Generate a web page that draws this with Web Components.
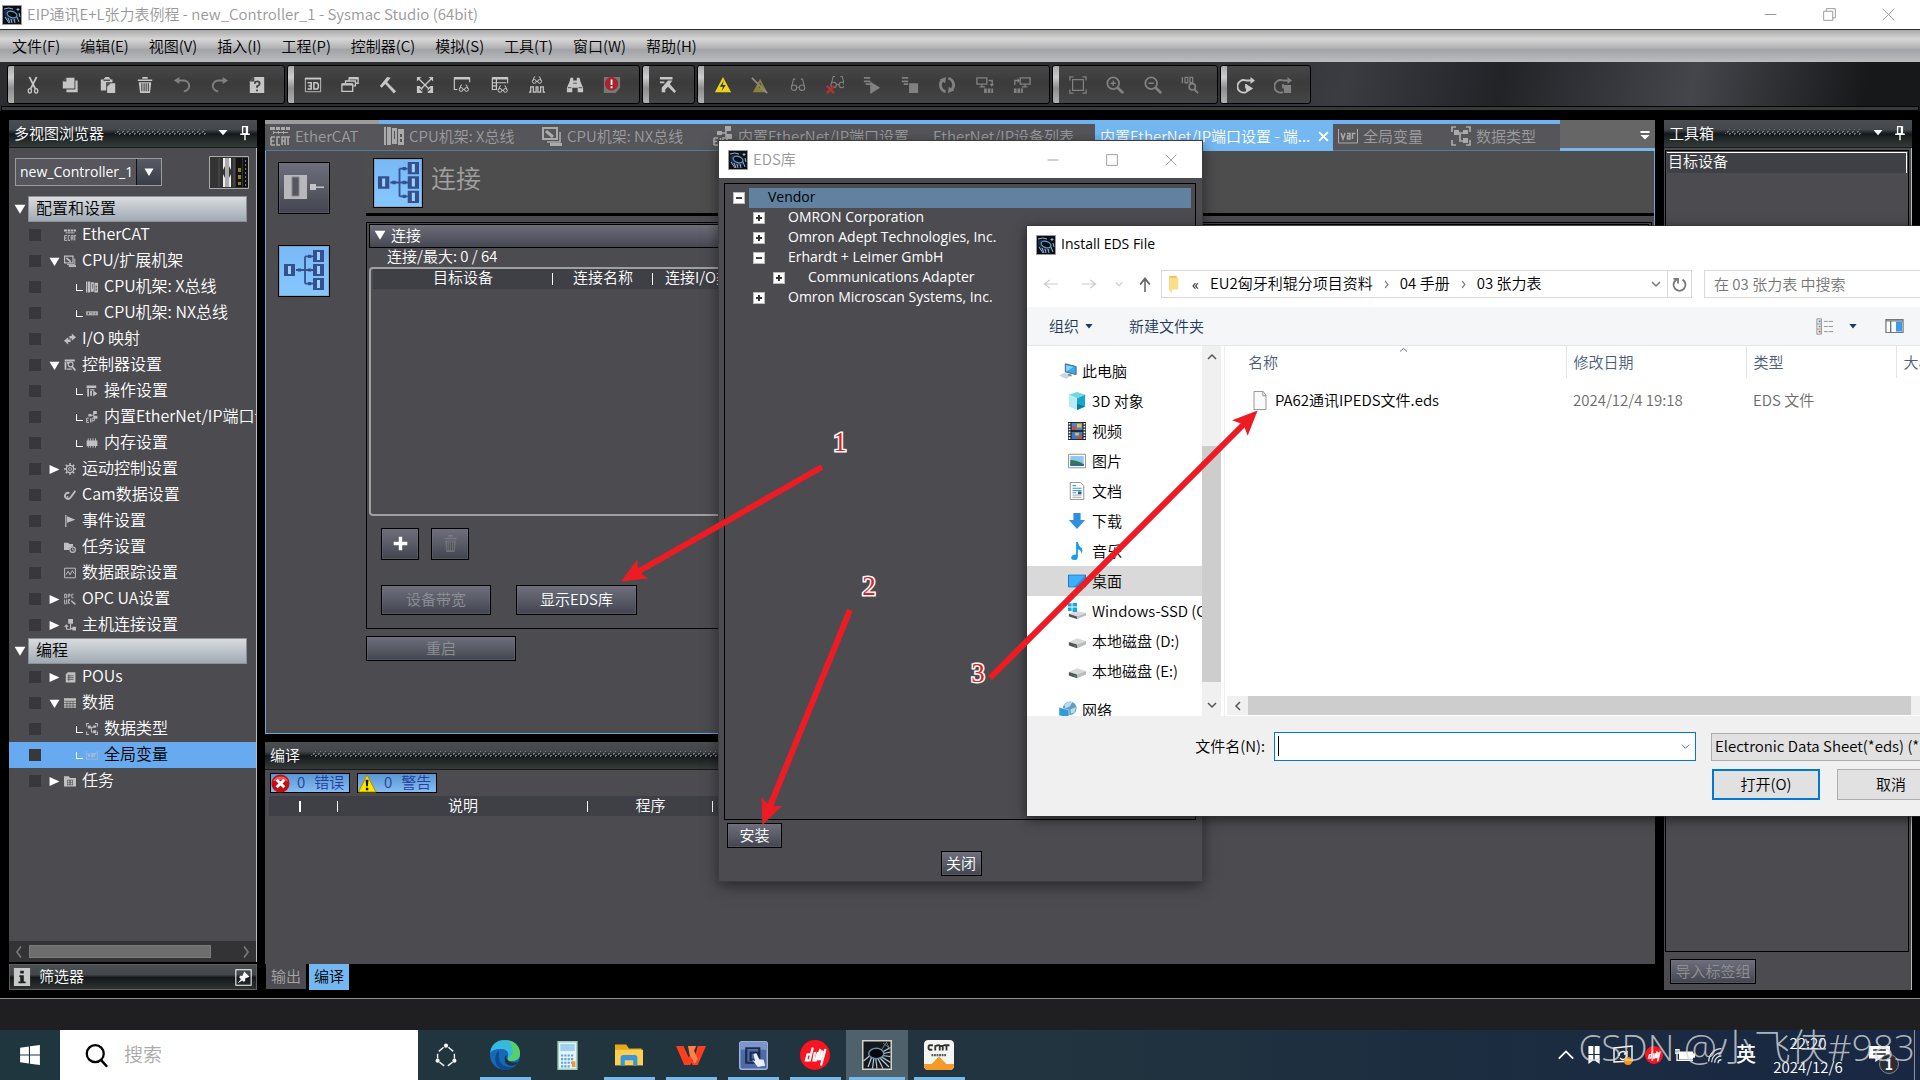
<!DOCTYPE html>
<html lang="zh-CN">
<head>
<meta charset="utf-8">
<title>Sysmac Studio</title>
<style>
html,body{margin:0;height:100%;overflow:hidden;background:#000}
body{font:350 15px/20px "Noto Sans CJK SC","Noto Sans",sans-serif;color:#fff}
</style>
</head>
<body>
<sysmac-desktop></sysmac-desktop>
<script>
const BASE = `*{box-sizing:border-box}:host{display:block}:host([hidden]){display:none}
button,input,select{font:inherit;color:inherit;margin:0;border-radius:0;outline:0}
button{cursor:default;padding:0;background:none;border:0}
select,input{appearance:none;min-width:0}
table{border-collapse:collapse;table-layout:fixed;border-spacing:0}th{font-weight:inherit;padding:0}td{padding:0}`;

function define(name, css, html) {
  customElements.define(name, class extends HTMLElement {
    connectedCallback() {
      if (this.shadowRoot) return;
      const root = this.attachShadow({ mode: 'open' });
      const t = document.createElement('template');
      t.innerHTML = `<style>${BASE}${css}</style>` + (typeof html === 'function' ? html(this) : html);
      root.append(t.content.cloneNode(true));
    }
  });
}

/* ---------- icons, all on a 20 x 20 grid ---------- */
const S = 'fill="none" stroke="currentColor"';
const glasses = `<g ${S} stroke-width="1.2"><circle cx="5.5" cy="13" r="3"/><circle cx="14.500" cy="13" r="3"/><path d="M8.500 12.500h3M3 11.500 5 3.500h2M17 11.500 15 3.500h-2"/></g>`;
const miniGlasses = (x, y) => `<g ${S} stroke-width="1.1" transform="translate(${x} ${y})"><circle cx="3" cy="6" r="2.100"/><circle cx="9" cy="6" r="2.100"/><path d="M5 6h2M1.500 5 3 1h1M10.500 5 9 1H8"/></g>`;
const letters = { // small pixel captions that belong to the pictograms
  ecat: 'M1 11h4M1 11v8M1 15h3M1 19h4M10 11H7v8h3M12 19v-8h3v8M12 15h3M16 11h4M18 11v8',
  eip: 'M1 12h4M1 12v7M1 15.500h3M1 19h4M7.500 12v7M10 19v-7h4v4h-4'
};
const ICONS = {
  cut: `<g ${S} stroke-width="1.500"><path d="M6 1 12.500 14M14 1 7.500 14" stroke-width="2"/><ellipse cx="6.500" cy="16.500" rx="1.800" ry="2.500"/><ellipse cx="13.500" cy="16.500" rx="1.800" ry="2.500"/></g>`,
  copy: `<path fill="currentColor" d="M6 2h9v12H2V6z"/><path fill="#444" d="M6 2v4H2z"/><path fill="currentColor" d="M16 5h2.500v13H6v-3h10z"/>`,
  paste: `<path fill="currentColor" d="M2 4h3l2-3h4l2 3h2v3H8v9H2z"/><path fill="#555" d="M5 4h7v1.500H5z"/><path fill="currentColor" d="M9 8h9v11H9z"/><path fill="#444" d="M9 8h4l-4 4z"/>`,
  trash: `<path fill="currentColor" d="M2 4h16v1.500H2zM7 1h6v2H7zM3 7h14l-1.500 12h-11z"/><path stroke="#444" stroke-width="1.200" d="M6.500 8v9M9 8v9M11.300 8v9M13.700 8v9"/>`,
  undo: `<path ${S} stroke-width="2" d="M5 5h7a5 5 0 0 1 0 12"/><path fill="currentColor" d="M1 5l6-4v8z"/>`,
  redo: `<path ${S} stroke-width="2" d="M15 5H8a5 5 0 0 0 0 12"/><path fill="currentColor" d="M19 5l-6-4v8z"/>`,
  help: `<path fill="currentColor" d="M7 1h11v18H2V6z"/><path fill="none" stroke="#3f3f3f" stroke-width="2" d="M7.500 8.500q0-2.500 2.700-2.500t2.700 2.500q0 1.500-2.800 3v1.500M10 15v2"/><path fill="#444" d="M7 1v5H2z"/>`,
  threeD: `<path fill="currentColor" d="M1 2h18v2H1z"/><path ${S} d="M1.500 2.500h17v15h-17z"/><path ${S} stroke-width="1.700" d="M4 7.500h4v7H4M5 11h3M11 7.500h2.500q2.500 0 2.500 3.500t-2.500 3.500H11z"/>`,
  cascade: `<g ${S} stroke-width="1.500"><path d="M9 5V2h10v6h-3M5 8V5.500h11V11h-2M1 9h12v8H1z"/></g><path fill="currentColor" d="M9 1h10v3H9zM1 8h12v2.500H1z"/>`,
  hammer: `<path fill="currentColor" d="M1 11 9 1l4 1-4 5 10 10-2.500 2.500L7 9l-4 4z"/>`,
  cross: `<path stroke="currentColor" stroke-width="1.500" d="M3 3l14 14M17 3 3 17"/><path fill="currentColor" d="M1 1h5L1 6zM19 1h-5l5 5zM1 11h3l3 3v5H1zM19 11h-3l-3 3v5h6z"/><path stroke="#444" stroke-width="1.200" d="M4 14l3 3M16 14l-3 3"/>`,
  watchwin: `<path fill="currentColor" d="M1 1h18v3H1z"/><path ${S} stroke-width="1.300" d="M1.500 3v12H5M18.500 3v4"/>${miniGlasses(6, 9)}`,
  watchtab: `<path fill="currentColor" d="M1 1h18v3H1z"/><path ${S} stroke-width="1.300" d="M1.500 3v12H7M18.500 3v5M6 3v12M1 7.500h16M1 11h6"/>${miniGlasses(7, 10)}`,
  wave: `${miniGlasses(4, 0)}<path ${S} stroke-width="1.400" d="M1 18h2v-6h3v6h3v-6h2v6h3v-6h3v6h2"/>`,
  binoc: `<path fill="currentColor" d="M5 2h3v3h4V2h3l1 4 3 7v5h-6v-5H7v5H1v-5l3-7z"/><path stroke="#444" d="M8 8h4M2 13h4M14 13h4"/>`,
  alertdoc: `<path fill="#777" d="M1 1h18v12l-5 6H1z"/><circle cx="9.500" cy="8.500" r="7.500" fill="#a8242c"/><path stroke="#fff" stroke-width="2" d="M9.500 4v6M9.500 11.500v2"/>`,
  winhammer: `<path fill="currentColor" d="M1 1h14v3H1zM1 6h5v2H1z"/><path fill="currentColor" d="M3 13l7-8 5 0-3 4 7 8-2 2-7-7-3 3v3H3z"/>`,
  warn: `<path fill="#e9d21e" d="M10 1l9 17H1z"/><path fill="#333" d="M11 5 6.500 12H10l-1.500 5L13 10H9.500z"/>`,
  warnoff: `<path fill="#8b8038" d="M10 3l8 15H2z"/><path stroke="#333" stroke-width="1.500" d="M10 8v5"/><path stroke="#8b8b8b" stroke-width="2" d="M1 2l17 17"/>`,
  glasses,
  glassesoff: `<g transform="translate(3 -3)">${glasses}</g><path stroke="#a33" stroke-width="3" d="M1 11l8 8M9 11l-8 8"/>`,
  play: `<path fill="currentColor" d="M1 1h7v2H1zM1 5h7v2H1zM3 8h5v2H3zM8 6l11 7-11 7z"/>`,
  stop: `<path fill="currentColor" d="M1 1h7v2H1zM1 5h7v2H1zM3 8h5v2H3zM9 8h10v11H9z"/>`,
  cycle: `<g ${S} stroke-width="3"><path d="M8.500 17.500A7.700 7.700 0 0 1 4.500 5M11.500 2.500a7.700 7.700 0 0 1 4 12.500"/></g><path fill="currentColor" d="M2 4l7-3-1 7zM18 16l-7 3 1-7z"/>`,
  pcdown: `<path ${S} stroke-width="1.500" d="M1 2h11v7H1zM4 12h6M6.500 9v3M14 5h4v5"/><path fill="currentColor" d="M15 9h5l-2.500 3zM9 14h3v5H9zM13 14h3v5h-3zM17 14h2v5h-2z"/>`,
  pcup: `<path ${S} stroke-width="1.500" d="M8 2h11v7H8zM10 12h6M13.500 9v3M2 10V5h4"/><path fill="currentColor" d="M5 2.500V8l3-3zM1 14h3v5H1zM5 14h3v5H5zM9 14h2v5H9z"/>`,
  fit: `<path ${S} stroke-width="1.400" d="M1 5V1h4M15 1h4v4M19 15v4h-4M5 19H1v-4M4 4h12v12H4z"/>`,
  zoomin: `<g ${S} stroke-width="2"><circle cx="8" cy="8" r="6.500"/><path d="M13 13l6 6" stroke-width="3"/><path d="M8 5v6M5 8h6" stroke-width="1.500"/></g>`,
  zoomout: `<g ${S} stroke-width="2"><circle cx="8" cy="8" r="6.500"/><path d="M13 13l6 6" stroke-width="3"/><path d="M5 8h6" stroke-width="1.500"/></g>`,
  zoom100: `<g ${S} stroke-width="1.400"><path d="M1.500 1v7M4.500 1.500h3v6h-3zM10 1.500h3v6h-3z"/><circle cx="12.500" cy="12" r="3.500" stroke-width="1.800"/><path d="M15 15l4 4" stroke-width="2"/></g>`,
  runarrow: `<path ${S} stroke-width="2" d="M10 18a7 7 0 1 1 0-13h7M10 9v5"/><path fill="currentColor" d="M15 1l5 4-5 4zM10 9l8 5-8 5z"/>`,
  runstop: `<path ${S} stroke-width="2" d="M10 18a7 7 0 1 1 0-13h7M10 9v5"/><path fill="currentColor" d="M15 1l5 4-5 4zM11 10h8v9h-8z"/>`,

  ecat: `<path ${S} stroke-width="1.600" d="${letters.ecat}"/><path fill="currentColor" d="M0 1h5v3H0zM6 1h4v3H6zM11 1h4v3h-4zM16 1h4v3h-4zM3 5h1v3H3zM8 5h1v3H8zM13 5h1v3h-1zM3 6h15v1H3z"/>`,
  rack: `<path fill="currentColor" d="M0 1h2v18H0zM3 1h4v18H3zM8 2h5v16H8zM14 3h6v16h-6z"/><path fill="#555" d="M10 5h1v8h-1zM16 8h2v3h-2zM16 13h2v3h-2z"/>`,
  racktool: `<path ${S} stroke-width="2" d="M1 2h14v11H1z"/><path stroke="currentColor" stroke-width="3" d="M4 5l7 6"/><path ${S} stroke-width="1.600" d="M5 16h13V6"/><path fill="currentColor" d="M8 17h12v3H8z"/>`,
  nxrack: `<path fill="#aaa" d="M0 7h20v7H0z"/><path fill="#555" d="M3 9h2v3H3zM11 9h1v3h-1zM15 9h1v3h-1z"/><path fill="#c66" d="M7 8h2v2H7z"/>`,
  eip: `<path ${S} stroke-width="1.600" d="${letters.eip}M6 7h7M13 3v8"/><path fill="currentColor" d="M4 5h5v4H4zM12 0h6v5h-6zM13 8h6v5h-6z"/>`,
  vari: `<path ${S} stroke-width="1" d="M.5 3v14h19V3"/><path ${S} stroke-width="1.500" d="M3 7l2 6 2-6M9 7.500h3v5.500H9.500v-3H12M14.500 13V7.500h3"/>`,
  types: `<path ${S} stroke-width="1.700" d="M1 6V1h4M15 1h4v5M1 14v5h4M15 19h4v-5M7 7h6M9 7v8h4"/><path fill="currentColor" d="M3 4h5v5H3zM12 4h5v4h-5zM12 12h5v5h-5z"/>`,
  iomap: `<path fill="currentColor" d="M9 5h4V1l7 6-7 6V9H9zM11 11v4H7v4l-7-6 7-6v4z"/>`,
  ctrl: `<path fill="currentColor" d="M1 1h17v3H1zM1 5h3v13H1zM5 5h4v3H5zM5 16h8v2H5z"/><circle cx="11" cy="9" r="4" ${S} stroke-width="2"/><path stroke="currentColor" stroke-width="3" d="M13 12l6 7"/>`,
  opset: `<path fill="currentColor" d="M1 1h16v4H1zM2 6h3v13H2zM7 7h7v2H7zM7 10h3v8H7zM12 9l7 5-7 5z"/>`,
  memory: `<path fill="currentColor" d="M1 6h18v9H1zM3 2h1.500v16H3zM7 2h1.500v16H7zM11 2h1.500v16H11zM15 2h1.500v16H15z"/>`,
  gear: `<g ${S}><circle cx="10" cy="10" r="6" stroke-width="2"/><circle cx="10" cy="10" r="2.500" stroke-width="1.500"/><path stroke-width="2.500" d="M10 0v4M10 16v4M0 10h4M16 10h4M3 3l3 3M14 14l3 3M17 3l-3 3M6 14l-3 3"/></g>`,
  cam: `<path ${S} stroke-width="3" d="M9 7a5 5 0 1 0 2 7l8-11"/><circle cx="6" cy="13" r="1.500" fill="currentColor"/>`,
  flag: `<path fill="currentColor" d="M2 0h2v20H2zM5 2l14 6-14 5z"/>`,
  taskset: `<path fill="currentColor" d="M0 3h7l2 2h6v4a6 6 0 0 0-6 6H0z"/><circle cx="14.500" cy="14.500" r="4.500" ${S} stroke-width="1.800"/><path ${S} stroke-width="1.400" d="M14.500 12v3h2.500"/>`,
  trace: `<path ${S} stroke-width="1.600" d="M1 2h18v16H1zM3 13l4-6 3 6 4-7 3 5"/>`,
  opc: `<path ${S} stroke-width="1.500" d="M1 2h3v6H1zM7 8V2h3v3H7M16 2h-3v6h3M1 11v7h3v-7M7 18v-7h3l-3 4 3 3"/><path stroke="currentColor" stroke-width="2.500" d="M12 13l7 6"/>`,
  host: `<path fill="currentColor" d="M7 0h8v8H7zM14 13h6v6h-6z"/><path ${S} stroke-width="1.800" d="M11 8v9H4M1 13l3-3 3 3M4 10v7M11 16h4"/>`,
  pou: `<path fill="currentColor" d="M6 2h13v17H3V6z"/><path stroke="#555" stroke-width="1.400" d="M6 8h10M6 11h10M6 14h10M8 6v11"/>`,
  grid: `<path fill="currentColor" d="M0 2h20v16H0z"/><path stroke="#555" stroke-width="1.300" d="M0 7h20M0 11h20M0 15h20M5 7v11M10 7v11M15 7v11"/>`,
  taskf: `<path fill="currentColor" d="M0 2h8l2 3h10v14H0z"/><path fill="#555" d="M5 8h10v9H5z"/><path fill="currentColor" d="M6 9h3v3H6zM11 9h3v3h-3zM6 13h3v3H6zM11 13h3v3h-3z"/>`,

  app: `<path fill="#0c1016" stroke="#9a9a9a" d="M.5.500h19v19H.5z"/><path fill="#1c2c44" d="M2 6q7-4 15 4l-3 6q-7 2-11-3z"/><ellipse cx="10" cy="9.500" rx="5" ry="3" fill="#080c12" stroke="#5b9cc8" stroke-width="1.200" transform="rotate(20 10 9.500)"/><path stroke="#a8c4dc" stroke-width=".900" fill="none" d="M2 4q5-2 9 0M3 12l4 6M6 13l2 5M9 14l1 4M12 14l1 4M15 12l2 5M16 3v3M14.500 4.500h3M17 8l1 4"/>`,
  pin: `<path ${S} stroke-width="1.700" d="M7 2h6v9H7zM4 11.500h12M10 12v7"/><path fill="currentColor" d="M11 2h2v9h-2z"/>`,
  pushpin: `<path ${S} stroke-width="1.200" d="M1 1h18v18H1z"/><path fill="currentColor" d="M11 3l6 6-2 1-3 1v3l-2 1-5-5 1-2h3l1-3zM7 12l1.500 1.500L3 17z"/>`,
  info: `<path fill="#c9c9c9" d="M1 0h18v20H1z"/><path fill="#222" d="M8 3h4v3H8zM7 8h5v7h2v2H6v-2h2v-5H7z"/>`,
  tri: `<path fill="currentColor" d="M1 3h18L10 18z"/>`,
  triR: `<path fill="currentColor" d="M1 2v16l18-8z"/>`,
  plus: `<path fill="currentColor" d="M8 2h4v6h6v4h-6v6H8v-6H2V8h6z"/>`,
  chevD: `<path ${S} stroke-width="3" d="M2 6l8 8 8-8"/>`,
  chevU: `<path ${S} stroke-width="3" d="M2 14l8-8 8 8"/>`,
  chevL: `<path ${S} stroke-width="3" d="M14 2l-8 8 8 8"/>`,
  chevR: `<path ${S} stroke-width="3" d="M6 2l8 8-8 8"/>`,
  thinD: `<path ${S} stroke-width="2" d="M2 6l8 8 8-8"/>`,
  thinU: `<path ${S} stroke-width="2" d="M2 14l8-8 8 8"/>`,
  min: `<path stroke="currentColor" stroke-width="1.500" d="M1 10h18"/>`,
  max: `<path ${S} stroke-width="1.500" d="M1 1h18v18H1z"/>`,
  restore: `<path ${S} stroke-width="1.500" d="M1 5h14v14H1zM5 5V1h14v14h-4"/>`,
  close: `<path stroke="currentColor" stroke-width="1.500" d="M1 1l18 18M19 1 1 19"/>`,
  bigclose: `<path stroke="currentColor" stroke-width="3.500" d="M2 2l16 16M18 2 2 18"/>`,
  tabmenu: `<path fill="currentColor" d="M1 2h18v4H1zM1 10h18l-9 9z"/>`,
  err: `<circle cx="10" cy="10" r="9.500" fill="#c40d12"/><path fill="#e85a55" d="M2 8a8.500 8 0 0 1 16 0q-8-4-16 0z"/><path stroke="#fff" stroke-width="3" d="M6 6l8 8M14 6l-8 8"/>`,
  bang: `<path fill="#ffe500" stroke="#a08a00" d="M9.500 1 19 19H.5z"/><path fill="#111" d="M8 6h3l-.6 7H8.600zM8.300 14.500h2.500v2.500H8.300z"/>`,
  topo: `<path ${S} stroke-width=".900" d="M6 10h10M10.500 3.200v13.600M10.500 3.200h4M10.500 16.800h4"/><path fill="currentColor" d="M0 7h5.500v6H0zM14.500 0H20v6h-5.500zM14.500 7H20v6h-5.500zM14.500 14H20v6h-5.500zM7 9.200h1.600v1.600H7zM12 9.200h1.600v1.600H12zM12 2.400h1.600V4H12zM12 16h1.600v1.600H12z"/><path fill="#9fd0ff" d="M2 8h1.500v4H2zM16.500 1H18v4h-1.500zM16.500 8H18v4h-1.500zM16.500 15H18v4h-1.500z"/>`,
  device: `<path fill="#b8b8bc" d="M0 4h11.500v12H0z"/><path fill="#55565e" stroke="#888" stroke-width=".500" d="M4 5h3.500v9.500H4z"/><path fill="#c4c4c8" d="M13 8.500h3v3h-3zM16 9.700h4v.800h-4z"/>`,

  back: `<path ${S} stroke-width="2" d="M20 10H2M9 3l-7 7 7 7"/>`,
  fwd: `<path ${S} stroke-width="2" d="M0 10h18M11 3l7 7-7 7"/>`,
  up: `<path ${S} stroke-width="2.600" d="M10 20V2M2 10l8-8 8 8"/>`,
  refresh: `<path ${S} stroke-width="2.400" d="M6 3.500a8 8 0 1 0 8 0M2 2.500h6v6"/>`,
  folder: `<path fill="#f0c04e" d="M3 1h11v14H3z"/><path fill="#fadd84" d="M3 1l4 3v16l-4-3zM7 3h9v13H7z"/>`,
  list: `<path fill="none" stroke="#888" d="M1 1h5v18H1zM1 7h5M1 13h5M9 4h4M14 4h5M9 10h4M14 10h5M9 16h4M14 16h5"/><path fill="#3a78c8" d="M3 3h2v2H3z"/><path fill="#5a9a40" d="M3 9h2v2H3z"/><path fill="#c33" d="M3 15h2v2H3z"/>`,
  pane: `<path fill="#fff" stroke="#777" stroke-width="1.300" d="M1 2h18v16H1z"/><path stroke="#777" stroke-width="1.500" d="M1 3.500h18M6 3v15"/><path fill="#3d9be8" d="M11.500 4.500H18V17h-6.500z"/>`,
  pc: `<path fill="#3aa9e9" stroke="#3f6076" d="M7 2l12 3v9L7 11z"/><path fill="#8fd4ff" d="M8 3.500l8 2-8 5z"/><path fill="#cdd6dd" d="M0 15l6-3 8 3-6 4z"/><path fill="#7d8a94" d="M10 13l4 1v2l-4-1z"/>`,
  cube: `<path fill="#6fd7e4" d="M10 0l9 3-9 4-9-4z"/><path fill="#b7ecf0" d="M1 3l9 4v13l-9-4z"/><path fill="#1aa6c9" d="M19 3l-9 4v13l9-4z"/><path fill="#0b7e9e" d="M10 13l9 3-9 4z"/>`,
  film: `<path fill="#222" d="M0 0h20v20H0z"/><path fill="#4a86d8" d="M4 1h12v8H4z"/><path fill="#3a7ad0" d="M4 11h12v8H4z"/><path fill="#d84a2a" d="M5 5h4v4H5zM11 15h4v4h-4z"/><path fill="#f0c030" d="M10 2h5v4h-5zM8 12h4v3H8z"/><path stroke="#fff" stroke-width="2" stroke-dasharray="1.800 1.400" d="M1.700 1v19M18.300 1v19"/>`,
  pic: `<path fill="#fff" stroke="#888" d="M.5 2.500h19v15H.5z"/><path fill="#8cc8f4" d="M2.500 4.500h15v11h-15z"/><path fill="#3b7553" d="M2.500 9q7 0 15 4.500v2h-15z"/><path fill="#2b6aa8" d="M2.500 13.500h15v2h-15z"/>`,
  doc: `<path fill="#fff" stroke="#888" d="M2.500.500H14l3.500 3.500v15.500h-15z"/><path stroke="#3a96d8" stroke-width="1.200" d="M5 4h4M5 7h10M5 9.500h10M5 12h4"/><path stroke="#999" d="M5 14.500h10M5 17h10"/><path fill="#2b5a88" d="M11 10.500h4v3h-4z"/>`,
  down: `<path fill="#2f8fe0" d="M6 1h8v8h5l-9 10L1 9h5z"/>`,
  note: `<path fill="#1a9bee" d="M9 0h2q1 5 4.500 7 1.500 3-.5 6-.5-4-4-5v8q0 4-4 4-3.500 0-3.500-2.500Q4 14 9 14z"/>`,
  desk: `<path fill="#1a9af5" stroke="#0b68b4" d="M.5 3.500h19v13H.5z"/><path fill="#3fb0ff" d="M1 4h18L7 16H1z"/>`,
  disk: `<path fill="#d8dadc" d="M1 11l9-4 10 3-10 4z"/><path fill="#555" d="M1 11l9 3v4l-9-3z"/><path fill="#b9bbbd" d="M10 14l10-4v4l-10 4z"/><path fill="#3c3" d="M7 15h2v1H7z"/>`,
  ssd: `<path fill="#d8dadc" d="M1 13l9-3 10 2-10 4z"/><path fill="#555" d="M1 13l9 3v3l-9-3z"/><path fill="#b9bbbd" d="M10 16l10-4v3l-10 4z"/><path fill="#16a9e8" d="M0 1.500h4V5H0zM5 1h5v4H5zM0 6h4v4H0zM5 6h5v5H5z"/>`,
  net: `<circle cx="12" cy="8" r="7.500" fill="#5f9bc4"/><path fill="#b8dcec" d="M6 4q5-5 9-3l-3 5-5 2zM13 9l6-2-2 6-4 1z"/><path fill="#2f9bdc" stroke="#fff" stroke-width=".500" d="M0 7l11 3v9L0 16z"/>`,
  file: `<path fill="#fbfbfb" stroke="#8a8a8a" d="M2.500.500H14l3.500 4v15h-15z"/><path fill="none" stroke="#8a8a8a" d="M13.500.500v4.500h4"/>`,

  win: `<path fill="#fff" d="M1 3.500l8-1.200v7.200H1zM10 2.100 19 1v8.500h-9zM1 10.500h8v7.200l-8-1.200zM10 10.500h9V19l-9-1.100z"/>`,
  search: `<circle cx="9" cy="8.500" r="6.800" fill="none" stroke="#000" stroke-width="1.800"/><path stroke="#000" stroke-width="2" d="M13.500 13.500 18.500 19"/>`,
  hex: `<g fill="none" stroke="#e8eef0" stroke-width="1.200"><path d="M8 3.500 4 7M12 3.500 16 7M3 9v4M17 9v4M4.500 16l4 3M15.500 16l-4 3"/></g><g fill="#fff"><circle cx="10" cy="2.200" r="1.700"/><circle cx="3" cy="14.700" r="1.700"/><circle cx="17" cy="14.700" r="1.700"/></g>`,
  edge: `<circle cx="10" cy="10" r="10" fill="#1668b8"/><path fill="#36b9dc" d="M0 9Q1 0 10 0t10 9q0 5-6 5-3 0-2-3 1-5-5-5T0 9z"/><path fill="#58d06a" d="M12 .300Q20 2 20 9q0 5-6 5-2 0-2-2 4-2 3-6T12 .300z"/><path fill="#0c4a92" d="M6 9q-1 9 8 9 2 0 3.500-1-3 3-7.500 3Q4 19 3.500 13q0-4 2.500-6z"/><path fill="#22303a" d="M11 10q-1 4 4 5 3 .300 4-1-2 4-6 3-4-1-3-6z"/>`,
  calc: `<path fill="#e9f2f8" stroke="#9cb" d="M3.500.500h13v19h-13z"/><path fill="#9fd0ee" d="M5 2h10v5H5z"/><path stroke="#5aa6d8" stroke-width="1.500" stroke-dasharray="1.500 .800" d="M5.500 10h9M5.500 12.500h9M5.500 15h9M5.500 17.500h6"/><path fill="#f09a30" d="M13 14h2.500v4H13z"/>`,
  explorer: `<path fill="#e8a81c" d="M0 2h8l2 3h9v4H0z"/><path fill="#fccf50" d="M0 6h20v12H0z"/><path fill="#3a96dc" d="M4 18v-6q0-2 2-2h8q2 0 2 2v6h-3v-4H7v4z"/>`,
  wps: `<path fill="#ff3d1f" d="M0 1h5l3.500 11 2-6 2 4-3 9h-4z"/><path fill="#ff3d1f" d="M14.500 1H20l-5.500 18h-3.500l-1-3 2-2z"/><path fill="#ff8048" d="M8 1h5.500L12 5.500 14.500 13l-2 5-3.500-9z"/>`,
  finger: `<rect width="20" height="20" rx="2" fill="#9fb3da"/><rect x="1" y="1" width="18" height="18" rx="1" fill="#4f6ba6"/><path fill="#7d96cc" d="M1 1h18v5H1z"/><path fill="none" stroke="#1d2b50" stroke-width="1.500" d="M5 5h9v10H5zM8 8h5v5H8z"/><path fill="#e9eefc" d="M10 9l2-.500 2 4 3 .500 1 4-5 1-4-5 2 1z"/>`,
  dip: `<circle cx="10" cy="10" r="10" fill="#fb1420"/><path fill="none" stroke="#fff" stroke-width="1.500" d="M8.500 5 6.500 13.500H4L5 9.500h2.500M10 8l-1 5.500h1.500L12 8M13.500 6 12 13.500M15 7l-1.500 6.500M17 6l-3 11"/>`,
  appbig: `<path fill="#15191e" stroke="#d4d4c8" d="M.5.500h19v19H.5z"/><path stroke="#b9cdd8" stroke-width=".800" d="M10 10l9-5M10 10l9-2M10 10l9 1M11 10l8 5M11 11l7 7M10 11l4 8M9 11l1 8M8 11l-1 8M7 10l-3 8M7 9l-6 5"/><path stroke="#77808a" stroke-width=".600" d="M12 8l4-6M14 2l5 4M16 1l3 6"/><ellipse cx="9.500" cy="9" rx="5" ry="3.500" fill="#05080c" stroke="#6a8ea4"/>`,
  cmt: `<path fill="#f4f4f2" d="M0 3q0-3 3-3h14q3 0 3 3v14q0 3-3 3H3q-3 0-3-3z"/><path fill="#f59a28" d="M10 11l5 5h5q0 4-3 4H3q-3 0-3-4h5z"/><path fill="none" stroke="#333" stroke-width="1.200" d="M6 3.500H4q-1 0-1 1.500t1 1.500h1.500M7.500 7V4q3-1 3 0v3M10.500 4h2v3M13 3.500h4M15 3.500V7"/><path stroke="#555" stroke-width="1.500" stroke-dasharray="1.200 .500" d="M5 10h10"/>`,
  squares: `<path fill="#fff" d="M2 0h7v9H2zM11 0h7v9h-7zM2 10h7v6l-7 4zM11 10h7v10l-7-4z"/>`,
  cast: `<path fill="none" stroke="#fff" stroke-width="1.400" d="M1 3l18-2v15L1 17zM6 11a4 4 0 0 1 7-3M14 6v3h-3M14 10a4 4 0 0 1-7 3"/><circle cx="15" cy="16" r="4" fill="#ff9500"/>`,
  battery: `<path fill="#fff" d="M4 6h14v9H4zM18 8h2v5h-2z"/><path fill="none" stroke="#fff" stroke-width="1.300" d="M2 4v12h16M0 4h4v4H0z"/>`,
  wifi: `<path fill="none" stroke="#dfe6ea" stroke-width="1.500" d="M2 17A15 15 0 0 1 17 2M5.500 18A11.500 11.500 0 0 1 17 6.500M9 18.500a8 8 0 0 1 8-8M13 19a4 4 0 0 1 4-4"/>`,
  notif: `<path fill="#fff" d="M0 1h20v14H11l-5 4v-4H0z"/><path stroke="#223" stroke-width="1.500" d="M4 5.500h12M4 10h12"/>`
};
customElements.define('ui-icon', class extends HTMLElement {
  connectedCallback() {
    if (this.shadowRoot) return;
    const s = this.getAttribute('size') || '20', h = this.getAttribute('h') || s;
    this.attachShadow({ mode: 'open' }).innerHTML =
      `<style>:host{display:block;flex:none;width:${s}px;height:${h}px}svg{display:block;width:100%;height:100%}</style>` +
      `<svg viewBox="0 0 20 20" preserveAspectRatio="none" aria-hidden="true">${ICONS[this.getAttribute('name')]}</svg>`;
  }
});
const ic = (n, s = 20, h = '') => `<ui-icon name="${n}" size="${s}" ${h ? `h="${h}"` : ''}></ui-icon>`;

/* ---------- main window chrome ---------- */
define('window-title', `:host{height:30px;background:#fff;border-bottom:1px solid #2d3030;color:#999}
header{display:flex;align-items:center;height:29px;padding:0 25px 0 2px;gap:5px}
h1{font-size:15px;font-weight:inherit;margin:0;flex:1;padding-bottom:2px}nav{display:flex;gap:46px}button{display:block}`,
  `<header>${ic('app')}<h1><slot></slot></h1><nav><button aria-label="最小化">${ic('min', 13)}</button><button aria-label="还原">${ic('restore', 13)}</button><button aria-label="关闭">${ic('close', 13)}</button></nav></header>`);

define('menu-bar', `:host{height:32px;background:linear-gradient(#a9a9ab,#d6d6d6 28%,#b4b4b6 55%,#a2a3a7 62%,#bcbdbf);color:#000}
nav{display:flex;align-items:center;height:32px;padding-left:12px;gap:20px}button{white-space:nowrap}`,
  () => `<nav>${['文件(F)', '编辑(E)', '视图(V)', '插入(I)', '工程(P)', '控制器(C)', '模拟(S)', '工具(T)', '窗口(W)', '帮助(H)'].map(t => `<button>${t}</button>`).join('')}</nav>`);

define('tool-group', `:host{height:39px;border:1px solid #000;border-radius:3px;background:linear-gradient(#474747,#3b3b3b 45%,#454545);overflow:hidden}
div{display:flex;height:37px;padding-right:8px}i{width:6px;background:linear-gradient(#aaa,#cdcdcd 30%,#8d8d8d 60%,#b2b2b2)}
button{flex:1;display:flex;align-items:center;justify-content:center;color:#c6c6c6}button.d{color:#818181}`,
  el => `<div><i></i>${el.getAttribute('icons').split(' ').map(n => { const d = n[0] === '-'; const k = d ? n.slice(1) : n; return `<button class="${d ? 'd' : ''}" aria-label="${k}">${ic(k, 18)}</button>`; }).join('')}</div>`);

define('tool-bar', `:host{height:49px;background:linear-gradient(100deg,#2b2d31 60%,#3b3c42 70%,#222327 78%,#45464b 88%,#17181a 97%)}
div{display:flex;gap:2px;padding:3px 0 2px 7px;height:44px}
tool-group:nth-child(1){width:278px}tool-group:nth-child(2){width:353px}tool-group:nth-child(3){width:53px}tool-group:nth-child(4){width:353px}tool-group:nth-child(5){width:166px}tool-group:nth-child(6){width:91px}
hr{margin:0 1px;border:1px solid #050505;height:5px;background:#38393b}`,
  `<div><tool-group icons="cut copy paste trash -undo -redo help"></tool-group>
<tool-group icons="threeD cascade hammer cross watchwin watchtab wave binoc alertdoc"></tool-group>
<tool-group icons="winhammer"></tool-group>
<tool-group icons="warn warnoff -glasses -glassesoff -play -stop -cycle -pcdown -pcup"></tool-group>
<tool-group icons="-fit -zoomin -zoomout -zoom100"></tool-group>
<tool-group icons="runarrow -runstop"></tool-group></div><hr>`);

define('panel-header', `:host{height:28px;background:linear-gradient(#4b4e51,#43464a 35%,#15181b 52%,#1b2022 60%,#353b39);border-bottom:1px solid #1a1a1a}
header{display:flex;align-items:center;height:27px;padding:0 4px 2px 5px;gap:11px}
h2{font-size:15px;font-weight:inherit;margin:0;white-space:nowrap}
i{flex:1;height:7px;background:radial-gradient(circle,#777 1px,transparent 1px) 0 0/5px 5px,radial-gradient(circle,#777 1px,transparent 1px) 2px 2px/5px 5px}
span{display:flex;align-items:center;gap:9px}:host([plain]) span{display:none}`,
  `<header><h2><slot></slot></h2><i></i><span>${ic('tri', 10, 7)}${ic('pin', 16)}</span></header>`);

define('tree-section', `div{display:flex;align-items:center;gap:2px;height:26px;padding:0 9px 0 5px}
b{flex:1;height:26px;font-weight:inherit;font-size:16px;line-height:20px;padding-left:7px;color:#000;border:1px solid #8b9096;background:linear-gradient(#dadcde,#a0aab4)}`,
  `<div>${ic('tri', 12)}<b><slot></slot></b></div>`);

define('tree-row', `:host{height:26px}div{display:flex;align-items:center;height:26px;padding-left:20px;font-size:16px;white-space:nowrap}
:host([selected]) div{background:#68aaf0;color:#000}
.sq{width:12px;height:12px;background:#38373c;margin-right:8px;flex:none}
.tw{width:10px;margin-right:5px;flex:none;color:#fff}.el{width:7px;height:7px;border:solid #fff;border-width:0 0 1px 1px;margin:0 3px 0 12px;flex:none}
ui-icon{color:#c0c0c2}.tw ui-icon{color:#fff}.t{padding-left:6px;line-height:20px;padding-bottom:5px}`,
  el => { const s = el.getAttribute('state') || '', sub = el.hasAttribute('sub');
    return `<div><i class="sq"></i><i class="tw">${s ? ic(s === 'open' ? 'tri' : 'triR', 11) : ''}</i>${sub ? '<i class="el"></i>' : ''}${ic(el.getAttribute('icon'), 12)}<span class="t"><slot></slot></span></div>`; });

define('project-explorer', `:host{display:flex;flex-direction:column;min-height:0}
.body{flex:1;display:flex;flex-direction:column;min-height:0;background:#4c4b50;border-right:1px solid #b9b9b9;overflow:hidden}
.pick{display:flex;align-items:center;justify-content:space-between;height:48px;padding:0 7px 0 6px}
.combo{position:relative;width:147px;height:28px}.combo select{width:100%;height:28px;padding:0 24px 0 4px;background:#56565c;border:1px solid #9b9b9b;color:#fff;font:14px/20px "Open Sans","Noto Sans CJK SC",sans-serif}
.combo i{position:absolute;right:1px;top:1px;width:25px;height:26px;background:linear-gradient(#575b66,#393d47);border-left:1px solid #111;display:flex;align-items:center;justify-content:center;pointer-events:none}
.thumb{width:40px;height:33px}
.tree{flex:1;min-height:0;overflow:hidden}
.sb{display:flex;align-items:center;height:21px;background:#333336;color:#777}.sb i{width:20px;display:flex;justify-content:center}
.sb b{width:182px;height:13px;background:#6d6d6d;border:1px solid #7b7b7b;margin-right:auto}
.filter{display:flex;align-items:center;height:26px;margin-top:2px;padding:0 4px 0 3px;gap:8px;border:1px solid #606060;background:linear-gradient(#4b4e51,#43464a 40%,#15181b 52%,#2d3331)}.filter span{flex:1;padding-bottom:2px}`,
  `<panel-header>多视图浏览器</panel-header>
<div class="body"><div class="pick"><label class="combo"><select aria-label="控制器"><option>new_Controller_1</option></select><i>${ic('tri', 10)}</i></label>
<svg class="thumb" viewBox="0 0 40 33"><path fill="#333" stroke="#aaa" d="M.5.500h39v32H.5z"/><path stroke="#555" d="M10 2v29M25 2v29"/><path fill="#eee" d="M14 2h2v8l-2 4zM20 2h2v12l-2-4zM14 31h2v-9l-2-4zM20 31h2V18l-2 4z"/><path fill="#aaa" d="M16 2h4v29h-4z"/><path fill="#111" d="M27 2h6v29h-6zM34 2h5v29h-5z"/><path fill="#8a8428" d="M29 12h3v4h-3zM29 19h3v4h-3zM29 26h3v3h-3z"/><path stroke="#777" stroke-dasharray="2 2" d="M36.500 4v26"/></svg></div>
<div class="tree"><tree-section>配置和设置</tree-section>
<tree-row icon="ecat">EtherCAT</tree-row><tree-row icon="racktool" state="open">CPU/扩展机架</tree-row>
<tree-row icon="rack" sub>CPU机架: X总线</tree-row><tree-row icon="nxrack" sub>CPU机架: NX总线</tree-row>
<tree-row icon="iomap">I/O 映射</tree-row><tree-row icon="ctrl" state="open">控制器设置</tree-row>
<tree-row icon="opset" sub>操作设置</tree-row><tree-row icon="eip" sub>内置EtherNet/IP端口设置</tree-row><tree-row icon="memory" sub>内存设置</tree-row>
<tree-row icon="gear" state="shut">运动控制设置</tree-row><tree-row icon="cam">Cam数据设置</tree-row><tree-row icon="flag">事件设置</tree-row>
<tree-row icon="taskset">任务设置</tree-row><tree-row icon="trace">数据跟踪设置</tree-row><tree-row icon="opc" state="shut">OPC UA设置</tree-row>
<tree-row icon="host" state="shut">主机连接设置</tree-row><tree-section>编程</tree-section>
<tree-row icon="pou" state="shut">POUs</tree-row><tree-row icon="grid" state="open">数据</tree-row><tree-row icon="types" sub>数据类型</tree-row>
<tree-row icon="vari" sub selected>全局变量</tree-row><tree-row icon="taskf" state="shut">任务</tree-row></div>
<div class="sb"><i>${ic('chevL', 10, 14)}</i><b></b><i>${ic('chevR', 10, 14)}</i></div></div>
<div class="filter">${ic('info', 18)}<span>筛选器</span>${ic('pushpin', 17)}</div>`);

define('editor-tab', `:host{flex:none;height:31px}button{display:flex;align-items:center;gap:5px;width:100%;height:31px;padding:0 4px 2px 5px;text-align:left;white-space:nowrap;color:#9d9d9f;background:#55555a;border-top:4px solid #6db3f0;border-bottom:1px solid #5379a4}
:host([first]) button{border-top-color:#9c9c9c}:host([active]) button{background:#74b8f2;border-color:#74b8f2;color:#fff}
span{flex:1}ui-icon{color:#aaa}:host([active]) ui-icon{color:#fff}`,
  el => `<button role="tab">${el.hasAttribute('icon') ? ic(el.getAttribute('icon')) : ''}<span><slot></slot></span>${el.hasAttribute('active') ? ic('bigclose', 11) : ''}</button>`);

define('editor-tabs', `:host{display:flex;height:31px}.rest{flex:1;background:#666;border-bottom:3px solid #74b8f2;display:flex;align-items:center;justify-content:flex-end;padding:2px 5px 0}
.a{width:114px}.b{width:158px}.c{width:171px}.d{width:220px}.e{width:167px}.f{width:238px}.g{width:113px}`,
  `<editor-tab class="a" first icon="ecat">EtherCAT</editor-tab><editor-tab class="b" icon="rack">CPU机架: X总线</editor-tab><editor-tab class="c" icon="racktool">CPU机架: NX总线</editor-tab>
<editor-tab class="d" icon="eip">内置EtherNet/IP端口设置</editor-tab><editor-tab class="e">EtherNet/IP设备列表</editor-tab><editor-tab class="f" active>内置EtherNet/IP端口设置 - 端...</editor-tab>
<editor-tab class="g" icon="vari">全局变量</editor-tab><editor-tab class="a" icon="types">数据类型</editor-tab><div class="rest">${ic('tabmenu', 10)}</div>`);

/* bevelled slate push button used across the studio */
define('slate-button', `:host{flex:none}button{display:flex;align-items:center;justify-content:center;width:100%;height:100%;min-height:25px;border:1px solid #000;background:linear-gradient(#6e6e7c,#5b5d69 45%,#42454f);box-shadow:inset 0 0 0 1px #74747c55;color:#fff;white-space:nowrap;padding:0 4px 2px}
:host([off]) button{color:#8f9096}:host([on]) button{background:linear-gradient(#78b9f6,#86c8fd);color:#35508f}`,
  el => `<button ${el.hasAttribute('off') ? 'disabled' : ''} aria-label="${el.getAttribute('label') || el.textContent}"><slot></slot></button>`);

define('connection-editor', `:host{flex:1;min-height:0;display:flex;background:#4c4b50;border:1px solid #6fa6da;border-top:0}
.rail{display:flex;flex-direction:column;gap:31px;width:100px;padding:11px 12px}.rail slate-button,.head slate-button{width:52px;height:52px}
.main{flex:1;min-width:0}.head{display:flex;gap:8px;padding:7px 7px 4px;border-bottom:3px solid #000;height:65px;background:#4d4d4d}
.head slate-button{width:50px;height:50px}h2{font-size:25px;line-height:38px;font-weight:inherit;color:#a0a0a0;margin:0}
section{margin:6px 2px 7px 0;border:1px solid #000;padding:1px 2px 13px}
h3{display:flex;align-items:center;gap:5px;height:24px;margin:0;padding:0 0 2px 4px;border:1px solid #000;font-size:15px;font-weight:inherit;background:linear-gradient(#6e6d7a,#454852)}
p{margin:0;line-height:16px;padding-left:18px;height:19px}
.list{height:249px;border:2px solid #a0a0a0;border-radius:4px;padding:0 2px}table{width:100%}tr{height:20px;background:#3f3f46}
th{background:linear-gradient(#fff,#fff) right center/1px 12px no-repeat;line-height:16px;vertical-align:top}th:last-child{background:none;text-align:left;padding-left:12px}
.row{display:flex;padding:12px 12px 0;gap:12px}.row+.row{padding-top:25px;gap:25px}.row slate-button{width:38px;height:32px}
.row .w1{width:110px;height:30px}.row .w2{width:121px;height:30px}.restart{width:150px;height:25px}`,
  `<div class="rail"><slate-button label="设备">${ic('device', 40)}</slate-button><slate-button on label="连接">${ic('topo', 40)}</slate-button></div>
<div class="main"><div class="head"><slate-button on label="连接">${ic('topo', 41)}</slate-button><h2>连接</h2></div>
<section><h3>${ic('tri', 12)}连接</h3><p>连接/最大: 0 / 64</p>
<div class="list"><table><colgroup><col style="width:180px"><col style="width:100px"><col></colgroup><thead><tr><th>目标设备</th><th>连接名称</th><th>连接I/O类型</th></tr></thead></table></div>
<div class="row"><slate-button label="添加">${ic('plus', 17)}</slate-button><slate-button off label="删除"><ui-icon name="trash" size="15" h="19" style="opacity:.5"></ui-icon></slate-button></div>
<div class="row"><slate-button class="w1" off>设备带宽</slate-button><slate-button class="w2">显示EDS库</slate-button></div></section>
<slate-button class="restart" off>重启</slate-button></div>`);

define('build-output', `:host{margin-top:8px;height:222px;background:#4c4b50}
.chips{display:flex;gap:7px;padding:3px 5px}.chips button{display:flex;align-items:center;width:80px;height:20px;border:1px solid #000;background:linear-gradient(#5b96d2,#84bdf3);color:#253f9c;gap:9px;line-height:16px}
.chips span{padding-bottom:3px}.chips ui-icon{margin-right:-2px}table{width:calc(100% - 6px);margin:0 4px}tr{height:20px;background:#3f3f46}
th{line-height:17px;height:20px;vertical-align:top;background:linear-gradient(#fff,#fff) right center/1px 11px no-repeat}th:first-child{background-size:2px 11px}th:last-child{background:none}`,
  `<panel-header plain>编译</panel-header><div class="chips"><button>${ic('err', 19)}<span>0</span><span>错误</span></button><button>${ic('bang', 19)}<span>0</span><span>警告</span></button></div>
<table><colgroup><col style="width:32px"><col style="width:37px"><col style="width:250px"><col style="width:125px"><col></colgroup><thead><tr><th></th><th></th><th>说明</th><th>程序</th><th></th></tr></thead></table>`);

define('output-tabs', `:host{display:flex;gap:3px;height:26px;padding-left:1px;align-items:flex-start}button{width:40px;height:25px;background:#4c4b50;color:#a5a5a5;padding-bottom:2px}button.on{height:26px;background:#74b8f2;color:#000}`,
  `<button role="tab">输出</button><button role="tab" class="on">编译</button>`);

define('tool-box', `:host{display:flex;flex-direction:column}.body{flex:1;display:flex;flex-direction:column;background:#4c4b50;border-right:1px solid #b9b9b9;padding:2px 0 6px 1px}
.list{flex:1;border:1px solid #000;margin-right:2px;padding:1px}.list h3{margin:0;font-size:15px;font-weight:inherit;line-height:16px;height:21px;background:#3f3f46;border:solid #fff;border-width:1px 1px 0 0;padding-left:1px}
slate-button{margin:7px 0 0 5px;width:86px;height:25px}`,
  `<panel-header>工具箱</panel-header><div class="body"><div class="list"><h3>目标设备</h3></div><slate-button off>导入标签组</slate-button></div>`);

/* ---------- EDS library dialog ---------- */
define('vendor-row', `:host{height:20px;font:14px/18px "Open Sans","Noto Sans CJK SC",sans-serif}div{display:flex;align-items:center;gap:4px;height:20px;white-space:nowrap}
button{width:12px;height:12px;background:linear-gradient(#444,#444) center/6px 2px no-repeat #fff;border:1px solid #bbb;flex:none}
:host([shut]) button{background:linear-gradient(#333,#333) center/6px 2px no-repeat,linear-gradient(#333,#333) center/2px 6px no-repeat,#fff}
span{flex:1;padding-left:19px;height:20px}:host([selected]) span{background:#6082a0;color:#000}
:host([level="1"]){padding-left:20px}:host([level="2"]){padding-left:40px}`,
  `<div><button aria-label="展开"></button><span><slot></slot></span></div>`);

define('eds-library', `:host{display:flex;flex-direction:column;background:#4c4b50;box-shadow:0 0 0 1px #3d3d40,0 4px 14px #0008}
header{display:flex;align-items:center;height:37px;background:#fff;color:#999;padding:0 25px 0 9px;gap:5px}h2{margin:0;flex:1;font-size:15px;font-weight:inherit;padding-bottom:2px}nav{display:flex;gap:47px}
.tree{flex:1;margin:5px 6px 0 5px;border:1px solid #000;padding:4px 4px 0 8px}
.foot{display:flex;flex-direction:column;padding:3px 7px 5px 8px;gap:3px}.install{width:55px;height:25px}.close{width:41px;height:25px;align-self:center}`,
  `<header>${ic('app')}<h2>EDS库</h2><nav><button aria-label="最小化">${ic('min', 12)}</button><button aria-label="最大化">${ic('max', 12)}</button><button aria-label="关闭">${ic('close', 12)}</button></nav></header>
<div class="tree"><vendor-row selected>Vendor</vendor-row><vendor-row level="1" shut>OMRON Corporation</vendor-row><vendor-row level="1" shut>Omron Adept Technologies, Inc.</vendor-row>
<vendor-row level="1">Erhardt + Leimer GmbH</vendor-row><vendor-row level="2" shut>Communications Adapter</vendor-row><vendor-row level="1" shut>Omron Microscan Systems, Inc.</vendor-row></div>
<div class="foot"><slate-button class="install">安装</slate-button><slate-button class="close">关闭</slate-button></div>`);

/* ---------- file picker ---------- */
define('place-row', `:host{height:30px;flex:none}a{display:flex;align-items:center;gap:6px;height:30px;padding-left:41px;white-space:nowrap;color:#000;text-decoration:none}
:host([root]) a{padding-left:32px;gap:5px}:host([selected]){background:#d9d9d9}`,
  el => `<a href="#">${ic(el.getAttribute('icon'), 18)}<span><slot></slot></span></a>`);

define('file-picker', `:host{display:flex;flex-direction:column;background:#fff;color:#000;overflow:hidden;box-shadow:0 0 0 1px #3338,0 3px 12px #0009}
header{display:flex;align-items:center;gap:5px;height:37px;padding-left:9px}h2{margin:0;font:14px/18px "Open Sans",sans-serif;padding-bottom:2px}
.nav{display:flex;align-items:center;height:42px;margin-bottom:2px;padding-left:16px;color:#ccc;flex:none;width:1000px}
.nav .up{color:#666;margin:0 10px 0 16px}.addr{display:flex;align-items:center;width:531px;height:28px;border:1px solid #d9d9d9;padding-left:5px;color:#000;margin-right:12px;white-space:nowrap}
.addr ui-icon{color:#777}.addr .t{padding-bottom:2px}.addr .c{margin:0 10px}.addr .end{margin-left:auto;margin-right:6px}.addr .re{border-left:1px solid #d9d9d9;height:26px;width:24px;display:flex;align-items:center;justify-content:center}
.q{width:240px;height:28px;border:1px solid #d9d9d9;padding:0 9px 2px;background:#fff}.q::placeholder{color:#757575;opacity:1}
.cmd{display:flex;align-items:center;height:39px;flex:none;background:#f5f6f8;border-bottom:1px solid #e4e6ea;color:#1e395b;padding:0 16px 0 22px;gap:36px}
.cmd button{display:flex;align-items:center;gap:6px}.cmd .v{margin-left:auto;gap:15px}.cmd .v+button{margin-left:-8px}
.mid{display:flex;flex:1;min-height:0}.places{width:175px;padding-top:10px;overflow:hidden;display:flex;flex-direction:column}.places .gap{flex:none;height:9px}
.vs{width:19px;background:#f0f0f0;display:flex;flex-direction:column;align-items:center;color:#555;padding:6px 0}.vs b{width:19px;height:236px;background:#cdcdcd;margin:auto 0 18px}.vs ui-icon{flex:none}
.files{flex:1;min-width:0;margin-left:3px;border-left:1px solid #eee;display:flex;flex-direction:column;overflow:hidden}
table{width:860px}th{height:32px;text-align:left;color:#4c607a;padding-left:7px;border-right:1px solid #e4e4e4}
th:first-child,td:first-child{padding-left:23px}td{height:46px;color:#6d6d6d;padding:0 0 2px 7px}td .n{display:flex;align-items:center;gap:7px;color:#000;padding-left:4px}
.th{position:relative;display:block;height:32px;line-height:32px}.th ui-icon{position:absolute;left:151px;top:0}
.hs{display:flex;align-items:center;margin:auto 0 1px 2px;height:19px;background:#f0f0f0;color:#555}.hs i{width:21px;display:flex;justify-content:center}.hs b{flex:1;height:19px;background:#cdcdcd;margin-right:9px}
footer{flex:none;height:100px;background:#f0f0f0;padding:16px 0 0;width:1000px}.line{display:flex;align-items:center;height:29px}
.line label{width:247px;text-align:right;padding:0 9px 2px 0}.name{position:relative;width:422px;height:29px;margin-right:15px}.name input{width:100%;height:29px;border:1px solid #0078d7;background:#fff;padding:0 26px 0 4px;display:block}
.name ui-icon{position:absolute;right:6px;top:10px;color:#555}.name i{position:absolute;left:4px;top:4px;width:1px;height:20px;background:#000}.line select{width:234px;height:28px;border:1px solid #adadad;background:#e1e1e1;padding:0 3px 2px}
.btns{display:flex;gap:17px;padding:8px 0 0 685px}.btns button{width:108px;height:31px;background:#e1e1e1;border:1px solid #adadad;padding-bottom:2px}.btns button:first-child{border:2px solid #0078d7}`,
  `<header>${ic('app')}<h2>Install EDS File</h2></header>
<div class="nav">${ic('back', 15, 12)}<ui-icon name="fwd" size="15" h="12" style="margin:0 18px 0 24px"></ui-icon>${ic('chevD', 8)}<span class="up">${ic('up', 12, 15)}</span>
<div class="addr">${ic('folder', 14, 18)}<span style="padding:0 11px">«</span><span class="t">EU2匈牙利辊分项目资料</span><span class="c">${ic('chevR', 7, 9)}</span><span class="t">04 手册</span><span class="c">${ic('chevR', 7, 9)}</span><span class="t">03 张力表</span><span class="end">${ic('chevD', 10)}</span><span class="re">${ic('refresh', 15)}</span></div>
<input class="q" type="search" aria-label="搜索" placeholder="在 03 张力表 中搜索"></div>
<div class="cmd"><button>组织${ic('tri', 8, 6)}</button><button>新建文件夹</button><button class="v" aria-label="视图">${ic('list', 18, 17)}${ic('tri', 8, 6)}</button><button aria-label="预览窗格">${ic('pane', 19, 16)}</button></div>
<div class="mid"><div class="places"><place-row root icon="pc">此电脑</place-row><place-row icon="cube">3D 对象</place-row><place-row icon="film">视频</place-row><place-row icon="pic">图片</place-row><place-row icon="doc">文档</place-row><place-row icon="down">下载</place-row><place-row icon="note">音乐</place-row><place-row icon="desk" selected>桌面</place-row><place-row icon="ssd">Windows-SSD (C:)</place-row><place-row icon="disk">本地磁盘 (D:)</place-row><place-row icon="disk">本地磁盘 (E:)</place-row><div class="gap"></div><place-row root icon="net">网络</place-row></div>
<div class="vs">${ic('chevU', 10)}<b></b>${ic('chevD', 10)}</div>
<div class="files"><table><colgroup><col style="width:341px"><col style="width:180px"><col style="width:150px"><col></colgroup><thead><tr><th><span class="th">名称${ic('thinU', 9, 8)}</span></th><th>修改日期</th><th>类型</th><th>大小</th></tr></thead>
<tbody><tr><td><span class="n">${ic('file', 16, 19)}PA62通讯IPEDS文件.eds</span></td><td>2024/12/4 19:18</td><td>EDS 文件</td><td></td></tr></tbody></table>
<div class="hs"><i>${ic('chevL', 10)}</i><b></b></div></div></div>
<footer><div class="line"><label for="fn">文件名(N):</label><div class="name"><input id="fn" type="text">${ic('thinD', 9)}<i></i></div><select aria-label="文件类型"><option>Electronic Data Sheet(*eds) (*.eds)</option></select></div>
<div class="btns"><button>打开(O)</button><button>取消</button></div></footer>`);

/* ---------- taskbar ---------- */
define('task-bar', `:host{height:50px;background:linear-gradient(90deg,#20363f,#22343f 55%,#1c2d40 75%,#192743)}
div.bar{display:flex;height:50px;align-items:stretch}.start{width:60px;display:flex;align-items:center;justify-content:center}
label{display:flex;align-items:center;width:358px;background:#fff;padding-left:24px;gap:15px}input{border:0;background:none;font-size:19px;width:200px;padding:0 0 2px}input::placeholder{color:#aaa;opacity:1}
.apps{display:flex}.apps button{width:62px;display:flex;align-items:center;justify-content:center}
.apps .net{width:56px}.apps .r{background:linear-gradient(#76b9ed,#76b9ed) center bottom/51px 3px no-repeat}.apps .on{background:linear-gradient(#76b9ed,#76b9ed) center bottom/56px 3px no-repeat,#4f626b}
.tray{margin-left:auto;display:flex;align-items:center;color:#fff}.tray ui-icon{margin-right:12px}.ime{font-size:20px;font-weight:500;margin-right:14px;padding-bottom:2px}
time{text-align:center;line-height:24px;width:76px;margin-right:23px;padding-bottom:1px}.nt{position:relative;width:46px;height:50px;border-right:1px solid #8a95a0;margin-right:5px;padding-top:15px}
.nt b{position:absolute;left:10px;top:24px;width:20px;height:20px;border:1px solid #888;border-radius:50%;background:#2a2d33;font-size:14px;line-height:18px;text-align:center}`,
  `<div class="bar"><button class="start" aria-label="开始">${ic('win', 22)}</button><label>${ic('search', 25)}<input type="search" placeholder="搜索" aria-label="搜索"></label>
<div class="apps"><button class="net" aria-label="网络">${ic('hex', 24)}</button><button class="r" aria-label="Edge">${ic('edge', 30)}</button><button aria-label="计算器">${ic('calc', 29)}</button><button class="r" aria-label="资源管理器">${ic('explorer', 28, 26)}</button><button class="r" aria-label="WPS">${ic('wps', 30, 21)}</button><button class="r" aria-label="Touch">${ic('finger', 29)}</button><button class="r" aria-label="dip">${ic('dip', 30)}</button><button class="r on" aria-label="Sysmac">${ic('appbig', 30)}</button><button class="r" aria-label="cMT Viewer">${ic('cmt', 30)}</button></div>
<div class="tray">${ic('thinU', 18)}${ic('squares', 14, 18)}${ic('cast', 20)}${ic('dip', 18)}${ic('battery', 20, 18)}${ic('wifi', 17)}<span class="ime">英</span><time>22:20<br>2024/12/6</time><div class="nt">${ic('notif', 21, 18)}<b>1</b></div></div></div>`);

/* ---------- red step arrows and numbers over the windows ---------- */
define('step-marks', `:host{pointer-events:none}svg{display:block;width:100%;height:100%;overflow:visible}
text{font:400 27px "Liberation Serif","Noto Sans CJK SC",serif;fill:#e01c24;stroke:#fff;stroke-width:3px;paint-order:stroke;text-anchor:middle}`,
  `<svg><defs><marker id="h" markerUnits="userSpaceOnUse" markerWidth="60" markerHeight="60" refX="0" refY="0" orient="auto" overflow="visible"><path fill="#ed1c24" d="M15 0-10-11-5 0-10 11z"/></marker></defs>
<g stroke="#ed1c24" stroke-width="6"><path marker-end="url(#h)" d="M822 467 634 574"/><path marker-end="url(#h)" d="M850 610 768 811"/><path marker-end="url(#h)" d="M990 678 1247 421"/></g>
<text x="840" y="451">1</text><text x="869" y="595">2</text><text x="978" y="682">3</text></svg>`);

define('sysmac-desktop', `:host{position:relative;display:flex;flex-direction:column;height:100vh;overflow:hidden;background:#000}
main{flex:1;min-height:0;display:flex;gap:8px;padding:9px 8px 8px 9px}project-explorer,tool-box{flex:none;width:248px}
.center{flex:1;min-width:0;display:flex;flex-direction:column;margin-right:1px}.status{height:32px;border-top:1px solid #8e8e8e;background:#1f1f21}
eds-library{position:absolute;left:719px;top:141px;width:483px;height:740px}
file-picker{position:absolute;left:1027px;right:0;top:226px;height:590px}
step-marks{position:absolute;inset:0}.mark{position:absolute;right:5px;bottom:9px;font:300 37px/48px "Open Sans","Noto Sans CJK SC",sans-serif;color:#d8dadccc;white-space:nowrap}`,
  `<window-title>EIP通讯E+L张力表例程 - new_Controller_1 - Sysmac Studio (64bit)</window-title><menu-bar></menu-bar><tool-bar></tool-bar>
<main><project-explorer></project-explorer><div class="center"><editor-tabs></editor-tabs><connection-editor></connection-editor><build-output></build-output><output-tabs></output-tabs></div><tool-box></tool-box></main>
<div class="status"></div><task-bar></task-bar><eds-library></eds-library><file-picker></file-picker><step-marks></step-marks><div class="mark">CSDN @小飞侠#983</div>`);
</script>
</body>
</html>
